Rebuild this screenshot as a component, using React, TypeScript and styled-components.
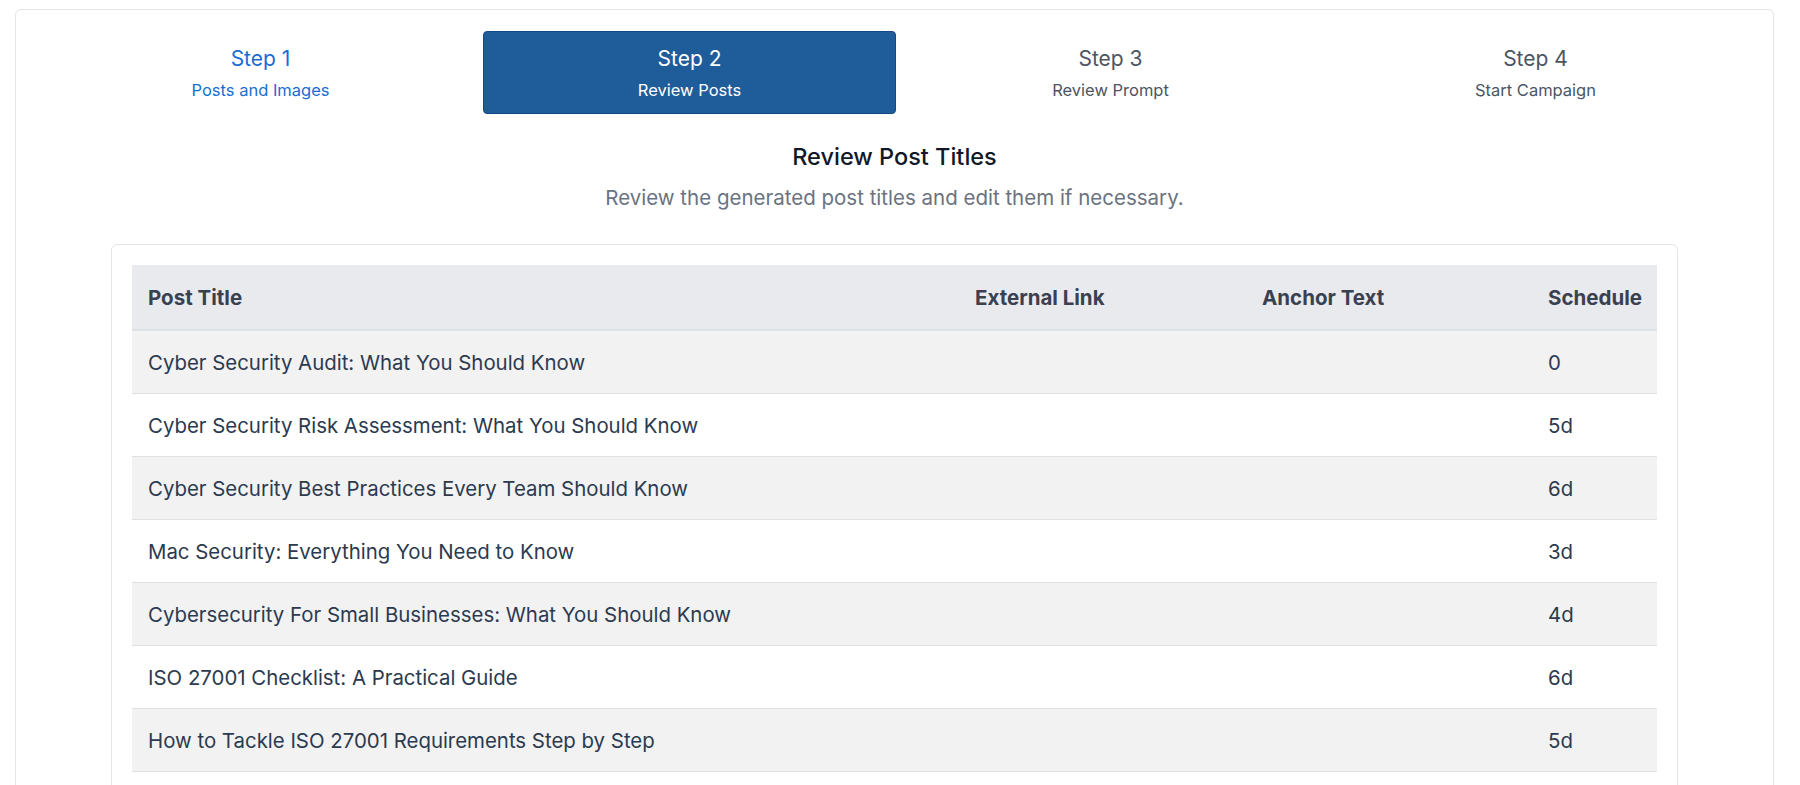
import React from 'react';
import styled, { createGlobalStyle } from 'styled-components';

const GlobalStyle = createGlobalStyle`
  body {
    margin: 0;
    background: #ffffff;
    font-family: Inter, "Noto Sans", "Liberation Sans", sans-serif;
    color: #111827;
  }
`;

type Step = { id: number; label: string; caption: string };
type Post = { id: number; title: string; link: string; anchor: string; schedule: string };

const steps: Step[] = [
  { id: 1, label: 'Step 1', caption: 'Posts and Images' },
  { id: 2, label: 'Step 2', caption: 'Review Posts' },
  { id: 3, label: 'Step 3', caption: 'Review Prompt' },
  { id: 4, label: 'Step 4', caption: 'Start Campaign' },
];

const currentStep = 2;

const posts: Post[] = [
  { id: 1, title: 'Cyber Security Audit: What You Should Know', link: '', anchor: '', schedule: '0' },
  { id: 2, title: 'Cyber Security Risk Assessment: What You Should Know', link: '', anchor: '', schedule: '5d' },
  { id: 3, title: 'Cyber Security Best Practices Every Team Should Know', link: '', anchor: '', schedule: '6d' },
  { id: 4, title: 'Mac Security: Everything You Need to Know', link: '', anchor: '', schedule: '3d' },
  { id: 5, title: 'Cybersecurity For Small Businesses: What You Should Know', link: '', anchor: '', schedule: '4d' },
  { id: 6, title: 'ISO 27001 Checklist: A Practical Guide', link: '', anchor: '', schedule: '6d' },
  { id: 7, title: 'How to Tackle ISO 27001 Requirements Step by Step', link: '', anchor: '', schedule: '5d' },
  { id: 8, title: 'Network Security Basics for Growing Companies', link: '', anchor: '', schedule: '4d' },
  { id: 9, title: 'Incident Response Plans: A Beginner Guide', link: '', anchor: '', schedule: '3d' },
];

const Page = styled.div`
  padding: 9px 26px 0 15px;
`;

const Card = styled.div`
  border: 1px solid #e3e5ea;
  border-radius: 6px;
  min-height: 900px;
  padding: 21px 0 24px;
`;

const Stepper = styled.div`
  display: grid;
  grid-template-columns: repeat(4, 1fr);
  padding: 0 25px 0 32px;
`;

const StepItem = styled.div<{ $state: 'done' | 'active' | 'todo' }>`
  display: flex;
  flex-direction: column;
  align-items: center;
  justify-content: center;
  gap: 9px;
  height: 81px;
  margin: ${(p) => (p.$state === 'active' ? '0 2px 0 10px' : '0 6px')};
  border-radius: 4px;
  border: 1px solid
    ${(p) => (p.$state === 'active' ? '#15488a' : 'transparent')};
  background: ${(p) => (p.$state === 'active' ? '#1f5c9a' : 'transparent')};
  color: ${(p) =>
    p.$state === 'active' ? '#ffffff' : p.$state === 'done' ? '#1a6dd3' : '#4b5563'};
`;

const StepLabel = styled.span`
  font-size: 21px;
  line-height: 25px;
`;

const StepCaption = styled.span`
  font-size: 16.5px;
  line-height: 20px;
`;

const Heading = styled.h2`
  margin: 27px 0 0;
  text-align: center;
  font-size: 23.5px;
  line-height: 32px;
  font-weight: 500;
  color: #111827;
`;

const Lead = styled.p`
  margin: 11px 0 0;
  text-align: center;
  font-size: 20.5px;
  line-height: 28px;
  color: #6b7280;
`;

const TableCard = styled.div`
  margin: 32px 95px 0;
  padding: 20px;
  border: 1px solid #e3e5ea;
  border-radius: 6px;
`;

const Table = styled.table`
  width: 100%;
  border-collapse: collapse;
  table-layout: fixed;
`;

const Th = styled.th<{ $width?: number }>`
  width: ${(p) => (p.$width ? `${p.$width}px` : 'auto')};
  height: 64px;
  padding: 0 16px;
  text-align: left;
  font-size: 20.5px;
  font-weight: 700;
  color: #394150;
  background: #e9eaee;
  border-bottom: 2px solid #dde0e5;
  white-space: nowrap;
`;

const Tr = styled.tr`
  background: #ffffff;

  &:nth-child(odd) {
    background: #f2f2f3;
  }
`;

const Td = styled.td`
  height: 62px;
  padding: 0 16px;
  font-size: 20.4px;
  color: #2c3a4f;
  border-bottom: 1px solid #dde0e5;
  white-space: nowrap;
  overflow: hidden;
`;

const App = () => {
  const renderSteps = steps.map(({ id, label, caption }) => {
    const state = id === currentStep ? 'active' : id < currentStep ? 'done' : 'todo';
    return (
      <StepItem key={id} $state={state}>
        <StepLabel>{label}</StepLabel>
        <StepCaption>{caption}</StepCaption>
      </StepItem>
    );
  });

  const renderRows = posts.map(({ id, title, link, anchor, schedule }) => (
    <Tr key={id}>
      <Td>{title}</Td>
      <Td>{link}</Td>
      <Td>{anchor}</Td>
      <Td>{schedule}</Td>
    </Tr>
  ));

  return (
    <Page>
      <GlobalStyle />
      <Card>
        <Stepper>{renderSteps}</Stepper>
        <Heading>Review Post Titles</Heading>
        <Lead>Review the generated post titles and edit them if necessary.</Lead>
        <TableCard>
          <Table>
            <thead>
              <tr>
                <Th $width={795}>Post Title</Th>
                <Th $width={255}>External Link</Th>
                <Th $width={254}>Anchor Text</Th>
                <Th>Schedule</Th>
              </tr>
            </thead>
            <tbody>{renderRows}</tbody>
          </Table>
        </TableCard>
      </Card>
    </Page>
  );
};

export default App;
